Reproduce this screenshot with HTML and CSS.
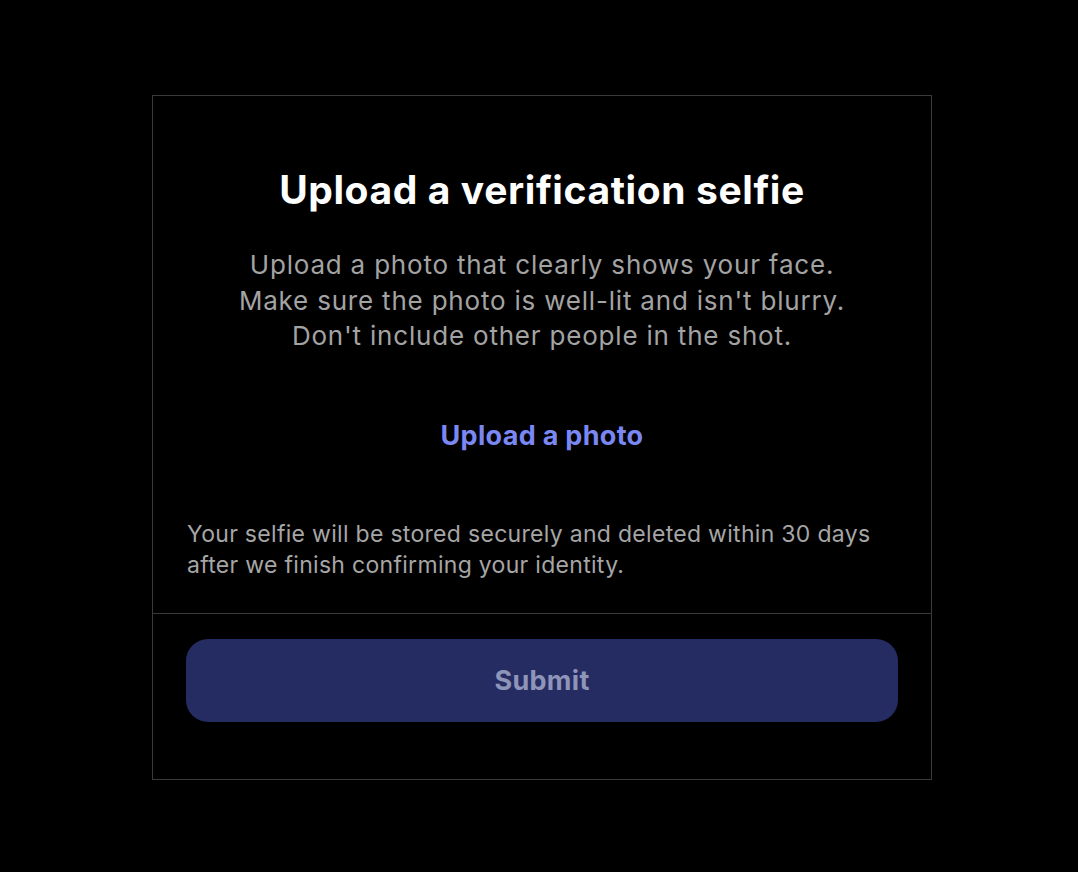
FILE: index.html
```html
<!DOCTYPE html>
<html lang="en">
<head>
<meta charset="utf-8">
<title>Upload a verification selfie</title>
<link rel="stylesheet" href="styles.css">
</head>
<body>
<div class="card">
  <div class="card-body">
    <h1 class="title">Upload a verification selfie</h1>
    <p class="intro">Upload a photo that clearly shows your face.<br>Make sure the photo is well-lit and isn't blurry.<br>Don't include other people in the shot.</p>
    <a class="upload-link" href="#">Upload a photo</a>
    <p class="note">Your selfie will be stored securely and deleted within 30 days after we finish confirming your identity.</p>
  </div>
  <div class="card-footer">
    <button class="submit" type="button" disabled>Submit</button>
  </div>
</div>
</body>
</html>
```

FILE: styles.css
```css
html, body {
  margin: 0;
  padding: 0;
  background: #000;
}
body {
  font-family: Inter, "Noto Sans", "Liberation Sans", sans-serif;
  padding-top: 95px;
  padding-left: 152px;
}
.card {
  width: 778px;
  border: 1px solid #3a3a3a;
  box-sizing: content-box;
}
.card-body {
  padding: 71px 34px 32px;
  display: flex;
  flex-direction: column;
}
.title {
  margin: 0;
  text-align: center;
  color: #fff;
  font-size: 39px;
  font-weight: 700;
  line-height: 46px;
  letter-spacing: 0.6px;
}
.intro {
  margin: 34px 0 0;
  text-align: center;
  color: #a3a3a3;
  font-size: 26px;
  line-height: 35.5px;
  font-weight: 400;
  letter-spacing: 0.8px;
}
.upload-link {
  margin-top: 66px;
  align-self: center;
  color: #7b87f2;
  font-size: 27px;
  font-weight: 700;
  line-height: 32px;
  letter-spacing: 0.3px;
  text-decoration: none;
}
.note {
  margin: 67px 0 0;
  color: #a6a6a6;
  font-size: 23px;
  line-height: 31px;
  letter-spacing: 0.3px;
}
.card-footer {
  border-top: 1px solid #3a3a3a;
  padding: 25px 33px 57px;
}
.submit {
  display: block;
  width: 100%;
  height: 83px;
  border: none;
  border-radius: 22px;
  background: #252c62;
  color: #8f94b9;
  font-family: inherit;
  font-size: 27px;
  font-weight: 700;
  letter-spacing: 0.3px;
  cursor: default;
}
```
